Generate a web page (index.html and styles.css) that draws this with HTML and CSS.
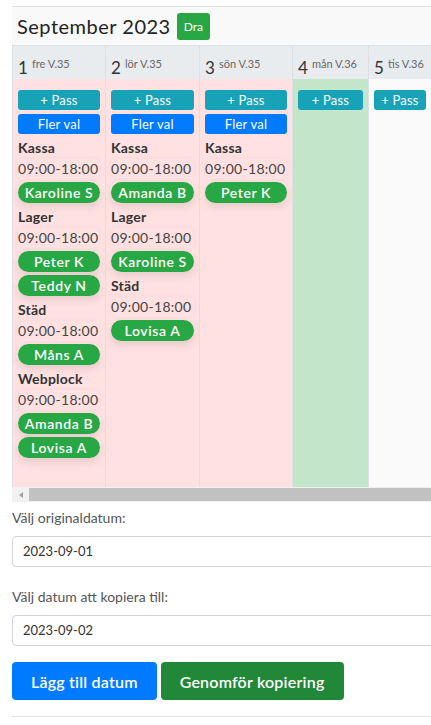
FILE: index.html
```html
<!DOCTYPE html>
<html>

<head>
    <meta charset="utf-8">
    <link rel="stylesheet" href="styles.css">
</head>

<body>

    <div id="main">
        <div class="cal-head">
            <span class="cal-title">September 2023</span>
            <button class="btn btn-green btn-xs">Dra</button>
        </div>

        <div class="cal-scroll">
            <div class="cal-row cal-days">
                <div class="day w1"><span class="num">1</span><span class="dname">fre V.35</span></div>
                <div class="day w2"><span class="num">2</span><span class="dname">lör V.35</span></div>
                <div class="day w3"><span class="num">3</span><span class="dname">sön V.35</span></div>
                <div class="day w4"><span class="num">4</span><span class="dname">mån V.36</span></div>
                <div class="day w5"><span class="num">5</span><span class="dname">tis V.36</span></div>
            </div>
            <div class="cal-row cal-body">
                <div class="cell w1 red">
                    <button class="btn btn-teal btn-sm">+ Pass</button>
                    <button class="btn btn-blue btn-sm">Fler val</button>
                    <div class="shift">Kassa</div>
                    <div class="time">09:00-18:00</div>
                    <span class="pill">Karoline S</span>
                    <div class="shift">Lager</div>
                    <div class="time">09:00-18:00</div>
                    <span class="pill">Peter K</span>
                    <span class="pill">Teddy N</span>
                    <div class="shift">Städ</div>
                    <div class="time">09:00-18:00</div>
                    <span class="pill">Måns A</span>
                    <div class="shift">Webplock</div>
                    <div class="time">09:00-18:00</div>
                    <span class="pill">Amanda B</span>
                    <span class="pill">Lovisa A</span>
                </div>
                <div class="cell w2 red">
                    <button class="btn btn-teal btn-sm">+ Pass</button>
                    <button class="btn btn-blue btn-sm">Fler val</button>
                    <div class="shift">Kassa</div>
                    <div class="time">09:00-18:00</div>
                    <span class="pill">Amanda B</span>
                    <div class="shift">Lager</div>
                    <div class="time">09:00-18:00</div>
                    <span class="pill">Karoline S</span>
                    <div class="shift">Städ</div>
                    <div class="time">09:00-18:00</div>
                    <span class="pill">Lovisa A</span>
                </div>
                <div class="cell w3 red">
                    <button class="btn btn-teal btn-sm">+ Pass</button>
                    <button class="btn btn-blue btn-sm">Fler val</button>
                    <div class="shift">Kassa</div>
                    <div class="time">09:00-18:00</div>
                    <span class="pill">Peter K</span>
                </div>
                <div class="cell w4 green">
                    <button class="btn btn-teal btn-sm">+ Pass</button>
                </div>
                <div class="cell w5 white">
                    <button class="btn btn-teal btn-sm">+ Pass</button>
                </div>
            </div>
        </div>
        <div class="scrollbar">
            <span class="arrow"></span>
            <span class="thumb"></span>
        </div>

        <div class="copy-form">
            <label class="lbl">Välj originaldatum:</label>
            <div class="input">2023-09-01</div>
            <label class="lbl">Välj datum att kopiera till:</label>
            <div class="input">2023-09-02</div>
            <div class="actions">
                <button class="btn btn-blue btn-lg">Lägg till datum</button>
                <button class="btn btn-dkgreen btn-lg">Genomför kopiering</button>
            </div>
            <hr class="sep">
        </div>
    </div>

</body>

</html>
```

FILE: styles.css
```css
* {
    box-sizing: border-box;
}

body {
    padding: 0px;
    margin: 0px;
    overflow: hidden;
    font-family: "Lato", "Noto Sans", sans-serif;
    color: #212529;
    background: #fff;
}

#main {
    width: 470px;
    padding: 6px 0px 0px 12px;
}

.btn {
    font-family: inherit;
    border: none;
    color: #fff;
    cursor: pointer;
    display: block;
}

.btn-xs {
    font-size: 12px;
    padding: 0px 7px;
    height: 27px;
    border-radius: 3px;
}

.btn-sm {
    width: 100%;
    height: 20px;
    font-size: 13px;
    letter-spacing: 0.2px;
    border-radius: 3px;
    padding: 0px;
    margin-bottom: 4px;
}

.btn-lg {
    font-size: 16px;
    font-weight: 600;
    height: 38px;
    padding: 0px 19px;
    border-radius: 4px;
    letter-spacing: 0.2px;
}

.btn-green {
    background: #28a745;
}

.btn-teal {
    background: #17a2b8;
}

.btn-blue {
    background: #007bff;
}

.btn-dkgreen {
    background: #218838;
}

.cal-head {
    display: flex;
    align-items: center;
    gap: 6px;
    height: 39px;
    padding-left: 5px;
    background: #f9f9f9;
    border-top: 1px solid #e3e3e6;
}

.cal-title {
    font-size: 20px;
    letter-spacing: 0.5px;
    color: #222;
}

.cal-scroll {
    width: 419px;
    overflow: hidden;
}

.cal-row {
    display: flex;
}

.w1 { width: 93px; flex: none; }
.w2 { width: 94px; flex: none; }
.w3 { width: 93px; flex: none; }
.w4 { width: 76px; flex: none; }
.w5 { width: 64px; flex: none; }

.cal-days .day {
    height: 34px;
    background: #e9ecef;
    border-left: 1px solid #dcdfe3;
    border-top: 1px solid #dcdfe3;
    padding: 6px 0px 0px 5px;
    white-space: nowrap;
}

.num {
    font-size: 17px;
    color: #333;
    vertical-align: -6px;
}

.dname {
    font-size: 11px;
    color: #666;
    margin-left: 4px;
}

.cal-body .cell {
    height: 408px;
    border-left: 1px solid #dcdfe3;
    padding: 11px 5px 0px 5px;
}

.red {
    background: #ffe1e1;
}

.green {
    background: #c3e6cb;
}

.white {
    background: #fafafa;
    border-right: 1px solid #dcdfe3;
}

.shift {
    font-size: 14px;
    font-weight: 700;
    color: #333;
    line-height: 20px;
    margin-top: 4px;
    letter-spacing: 0.2px;
}

.time {
    font-size: 14px;
    color: #444;
    letter-spacing: 0.3px;
    line-height: 20px;
    margin-top: 1px;
    margin-bottom: 3px;
    border-radius: 6px;
    box-shadow: 0 0 6px rgba(0, 0, 0, 0.04);
    white-space: nowrap;
}

.pill {
    display: block;
    height: 21px;
    line-height: 21px;
    margin-bottom: 3px;
    background: #28a745;
    color: #fff;
    font-size: 14px;
    font-weight: 600;
    letter-spacing: 0.6px;
    text-align: center;
    border-radius: 11px;
    box-shadow: 0 4px 8px rgba(0, 0, 0, 0.1);
    white-space: nowrap;
}

.scrollbar {
    width: 419px;
    height: 15px;
    display: flex;
    align-items: center;
    background: #f1f1f1;
}

.arrow {
    width: 17px;
    display: flex;
    justify-content: center;
}

.arrow::before {
    content: "";
    border-right: 4px solid #a3a3a3;
    border-top: 3px solid transparent;
    border-bottom: 3px solid transparent;
}

.thumb {
    flex: 1;
    height: 13px;
    background: #c1c1c1;
}

.copy-form {
    padding-top: 2px;
}

.lbl {
    display: block;
    font-size: 14px;
    color: #555;
    line-height: 22px;
    padding-top: 3px;
    margin-bottom: 7px;
}

.input {
    height: 31px;
    border: 1px solid #ced4da;
    border-radius: 4px;
    padding: 6px 10px;
    font-size: 13px;
    color: #333;
    margin-bottom: 16px;
    background: #fff;
}

.actions {
    display: flex;
    gap: 4px;
}

.sep {
    border: none;
    border-top: 1px solid #e3e3e3;
    margin: 16px 0px 0px 0px;
}
```
